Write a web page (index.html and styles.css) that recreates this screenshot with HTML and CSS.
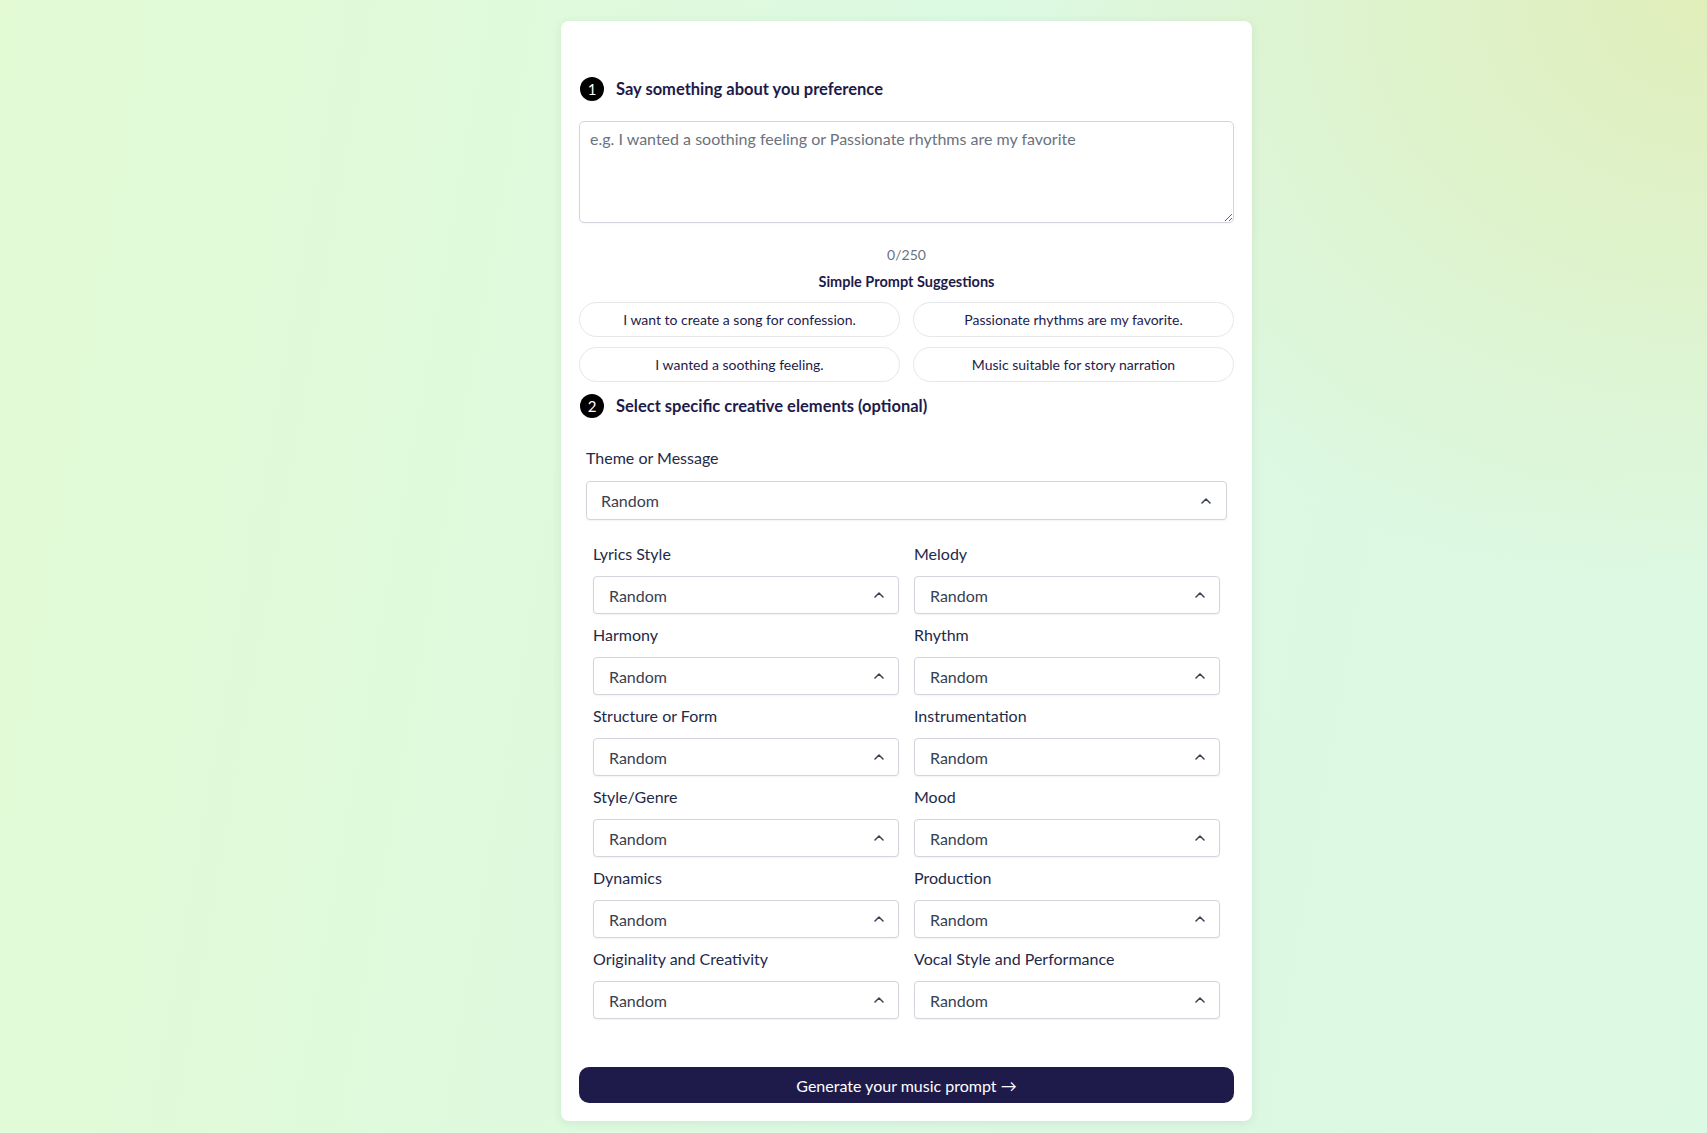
FILE: index.html
```html
<!DOCTYPE html>
<html lang="en">
<head>
<meta charset="utf-8">
<title>Music Prompt Generator</title>
<link rel="stylesheet" href="styles.css">
</head>
<body>
<main class="card">
  <div class="step">
    <span class="step-num">1</span>
    <h2 class="step-title">Say something about you preference</h2>
  </div>
  <textarea class="prompt" placeholder="e.g. I wanted a soothing feeling or Passionate rhythms are my favorite"></textarea>
  <div class="counter">0/250</div>
  <div class="sugg-title">Simple Prompt Suggestions</div>
  <div class="pills">
    <button class="pill">I want to create a song for confession.</button>
    <button class="pill">Passionate rhythms are my favorite.</button>
    <button class="pill">I wanted a soothing feeling.</button>
    <button class="pill">Music suitable for story narration</button>
  </div>
  <div class="step step-two">
    <span class="step-num">2</span>
    <h2 class="step-title">Select specific creative elements (optional)</h2>
  </div>

  <div class="theme">
    <div class="label">Theme or Message</div>
    <div class="select select-wide"><span>Random</span><svg class="chev" width="10" height="6" viewBox="0 0 10 6"><path d="M1 5 L5 1 L9 5" fill="none" stroke="#374151" stroke-width="1.5" stroke-linecap="round" stroke-linejoin="round"/></svg></div>
  </div>

  <div class="grid">
    <div class="field"><div class="label">Lyrics Style</div><div class="select"><span>Random</span><svg class="chev" width="10" height="6" viewBox="0 0 10 6"><path d="M1 5 L5 1 L9 5" fill="none" stroke="#374151" stroke-width="1.5" stroke-linecap="round" stroke-linejoin="round"/></svg></div></div>
    <div class="field"><div class="label">Melody</div><div class="select"><span>Random</span><svg class="chev" width="10" height="6" viewBox="0 0 10 6"><path d="M1 5 L5 1 L9 5" fill="none" stroke="#374151" stroke-width="1.5" stroke-linecap="round" stroke-linejoin="round"/></svg></div></div>
    <div class="field"><div class="label">Harmony</div><div class="select"><span>Random</span><svg class="chev" width="10" height="6" viewBox="0 0 10 6"><path d="M1 5 L5 1 L9 5" fill="none" stroke="#374151" stroke-width="1.5" stroke-linecap="round" stroke-linejoin="round"/></svg></div></div>
    <div class="field"><div class="label">Rhythm</div><div class="select"><span>Random</span><svg class="chev" width="10" height="6" viewBox="0 0 10 6"><path d="M1 5 L5 1 L9 5" fill="none" stroke="#374151" stroke-width="1.5" stroke-linecap="round" stroke-linejoin="round"/></svg></div></div>
    <div class="field"><div class="label">Structure or Form</div><div class="select"><span>Random</span><svg class="chev" width="10" height="6" viewBox="0 0 10 6"><path d="M1 5 L5 1 L9 5" fill="none" stroke="#374151" stroke-width="1.5" stroke-linecap="round" stroke-linejoin="round"/></svg></div></div>
    <div class="field"><div class="label">Instrumentation</div><div class="select"><span>Random</span><svg class="chev" width="10" height="6" viewBox="0 0 10 6"><path d="M1 5 L5 1 L9 5" fill="none" stroke="#374151" stroke-width="1.5" stroke-linecap="round" stroke-linejoin="round"/></svg></div></div>
    <div class="field"><div class="label">Style/Genre</div><div class="select"><span>Random</span><svg class="chev" width="10" height="6" viewBox="0 0 10 6"><path d="M1 5 L5 1 L9 5" fill="none" stroke="#374151" stroke-width="1.5" stroke-linecap="round" stroke-linejoin="round"/></svg></div></div>
    <div class="field"><div class="label">Mood</div><div class="select"><span>Random</span><svg class="chev" width="10" height="6" viewBox="0 0 10 6"><path d="M1 5 L5 1 L9 5" fill="none" stroke="#374151" stroke-width="1.5" stroke-linecap="round" stroke-linejoin="round"/></svg></div></div>
    <div class="field"><div class="label">Dynamics</div><div class="select"><span>Random</span><svg class="chev" width="10" height="6" viewBox="0 0 10 6"><path d="M1 5 L5 1 L9 5" fill="none" stroke="#374151" stroke-width="1.5" stroke-linecap="round" stroke-linejoin="round"/></svg></div></div>
    <div class="field"><div class="label">Production</div><div class="select"><span>Random</span><svg class="chev" width="10" height="6" viewBox="0 0 10 6"><path d="M1 5 L5 1 L9 5" fill="none" stroke="#374151" stroke-width="1.5" stroke-linecap="round" stroke-linejoin="round"/></svg></div></div>
    <div class="field"><div class="label">Originality and Creativity</div><div class="select"><span>Random</span><svg class="chev" width="10" height="6" viewBox="0 0 10 6"><path d="M1 5 L5 1 L9 5" fill="none" stroke="#374151" stroke-width="1.5" stroke-linecap="round" stroke-linejoin="round"/></svg></div></div>
    <div class="field"><div class="label">Vocal Style and Performance</div><div class="select"><span>Random</span><svg class="chev" width="10" height="6" viewBox="0 0 10 6"><path d="M1 5 L5 1 L9 5" fill="none" stroke="#374151" stroke-width="1.5" stroke-linecap="round" stroke-linejoin="round"/></svg></div></div>
  </div>

  <button class="generate">Generate your music prompt →</button>
</main>
</body>
</html>
```
FILE: styles.css
```css
* { box-sizing: border-box; }

html, body {
  margin: 0;
  padding: 0;
}

body {
  min-height: 1133px;
  font-family: Lato, "Noto Sans", "Liberation Sans", sans-serif;
  color: #1e2a4a;
  background:
    radial-gradient(ellipse 700px 600px at 100% 0%, rgba(224, 238, 186, 1) 0%, rgba(224, 238, 186, 0) 100%),
    linear-gradient(100deg, #e3fad5 0%, #dffadc 30%, #dcf9e3 55%, #dcf8e2 75%, #dcf9e3 100%);
  overflow: hidden;
}

.card {
  width: 691px;
  margin: 21px 0 0 561px;
  padding: 56px 18px 18px;
  background: #ffffff;
  border-radius: 8px;
  box-shadow: 0 2px 10px rgba(60, 90, 60, 0.10);
}

.step {
  display: flex;
  align-items: center;
  gap: 12px;
  height: 24px;
  padding-left: 1px;
}

.step-two {
  margin-top: 12px;
}

.step-num {
  width: 24px;
  height: 24px;
  border-radius: 50%;
  background: #000;
  color: #fff;
  font-size: 15px;
  display: flex;
  align-items: center;
  justify-content: center;
  line-height: 1;
}

.step-title {
  margin: 0;
  font-size: 16.5px;
  font-weight: 700;
  color: #1e1b4b;
}

.prompt {
  display: block;
  width: 100%;
  height: 102px;
  margin-top: 20px;
  padding: 7px 10px;
  border: 1px solid #d4d4dc;
  border-radius: 5px;
  font-family: inherit;
  font-size: 16px;
  color: #1e2a4a;
  resize: vertical;
  outline: none;
  box-shadow: 0 1px 2px rgba(0, 0, 0, 0.04);
}

.prompt::placeholder {
  color: #6b7280;
}

.counter {
  margin-top: 22px;
  text-align: center;
  font-size: 14px;
  line-height: 20px;
  color: #6b7280;
}

.sugg-title {
  margin-top: 7px;
  text-align: center;
  font-size: 14.5px;
  line-height: 20px;
  font-weight: 700;
  color: #1e1b4b;
}

.pills {
  margin-top: 10px;
  display: grid;
  grid-template-columns: 1fr 1fr;
  gap: 10px 13px;
}

.pill {
  height: 35px;
  background: #fff;
  border: 1px solid #e5e7eb;
  border-radius: 18px;
  font-family: inherit;
  font-size: 14px;
  color: #1e1b4b;
  cursor: pointer;
}

.theme {
  margin-top: 28px;
  padding: 0 7px;
}

.label {
  font-size: 16px;
  line-height: 24px;
  color: #1e2a4a;
}

.select {
  margin-top: 10px;
  height: 38px;
  display: flex;
  align-items: center;
  justify-content: space-between;
  padding: 0 14px 0 15px;
  border: 1px solid #d4d4dc;
  border-radius: 4px;
  background: #fff;
  font-size: 16px;
  color: #374151;
  box-shadow: 0 1px 2px rgba(0, 0, 0, 0.05);
}

.select-wide {
  margin-top: 11px;
  height: 39px;
  padding: 0 15px 0 14px;
}

.chev {
  display: block;
}

.grid {
  margin-top: 22px;
  padding: 0 14px;
  display: grid;
  grid-template-columns: 1fr 1fr;
  gap: 9px 15px;
}

.generate {
  display: block;
  width: 100%;
  height: 36px;
  margin-top: 48px;
  border: none;
  border-radius: 10px;
  background: #1e1b4b;
  color: #fff;
  font-family: inherit;
  font-size: 16px;
  cursor: pointer;
}
```
